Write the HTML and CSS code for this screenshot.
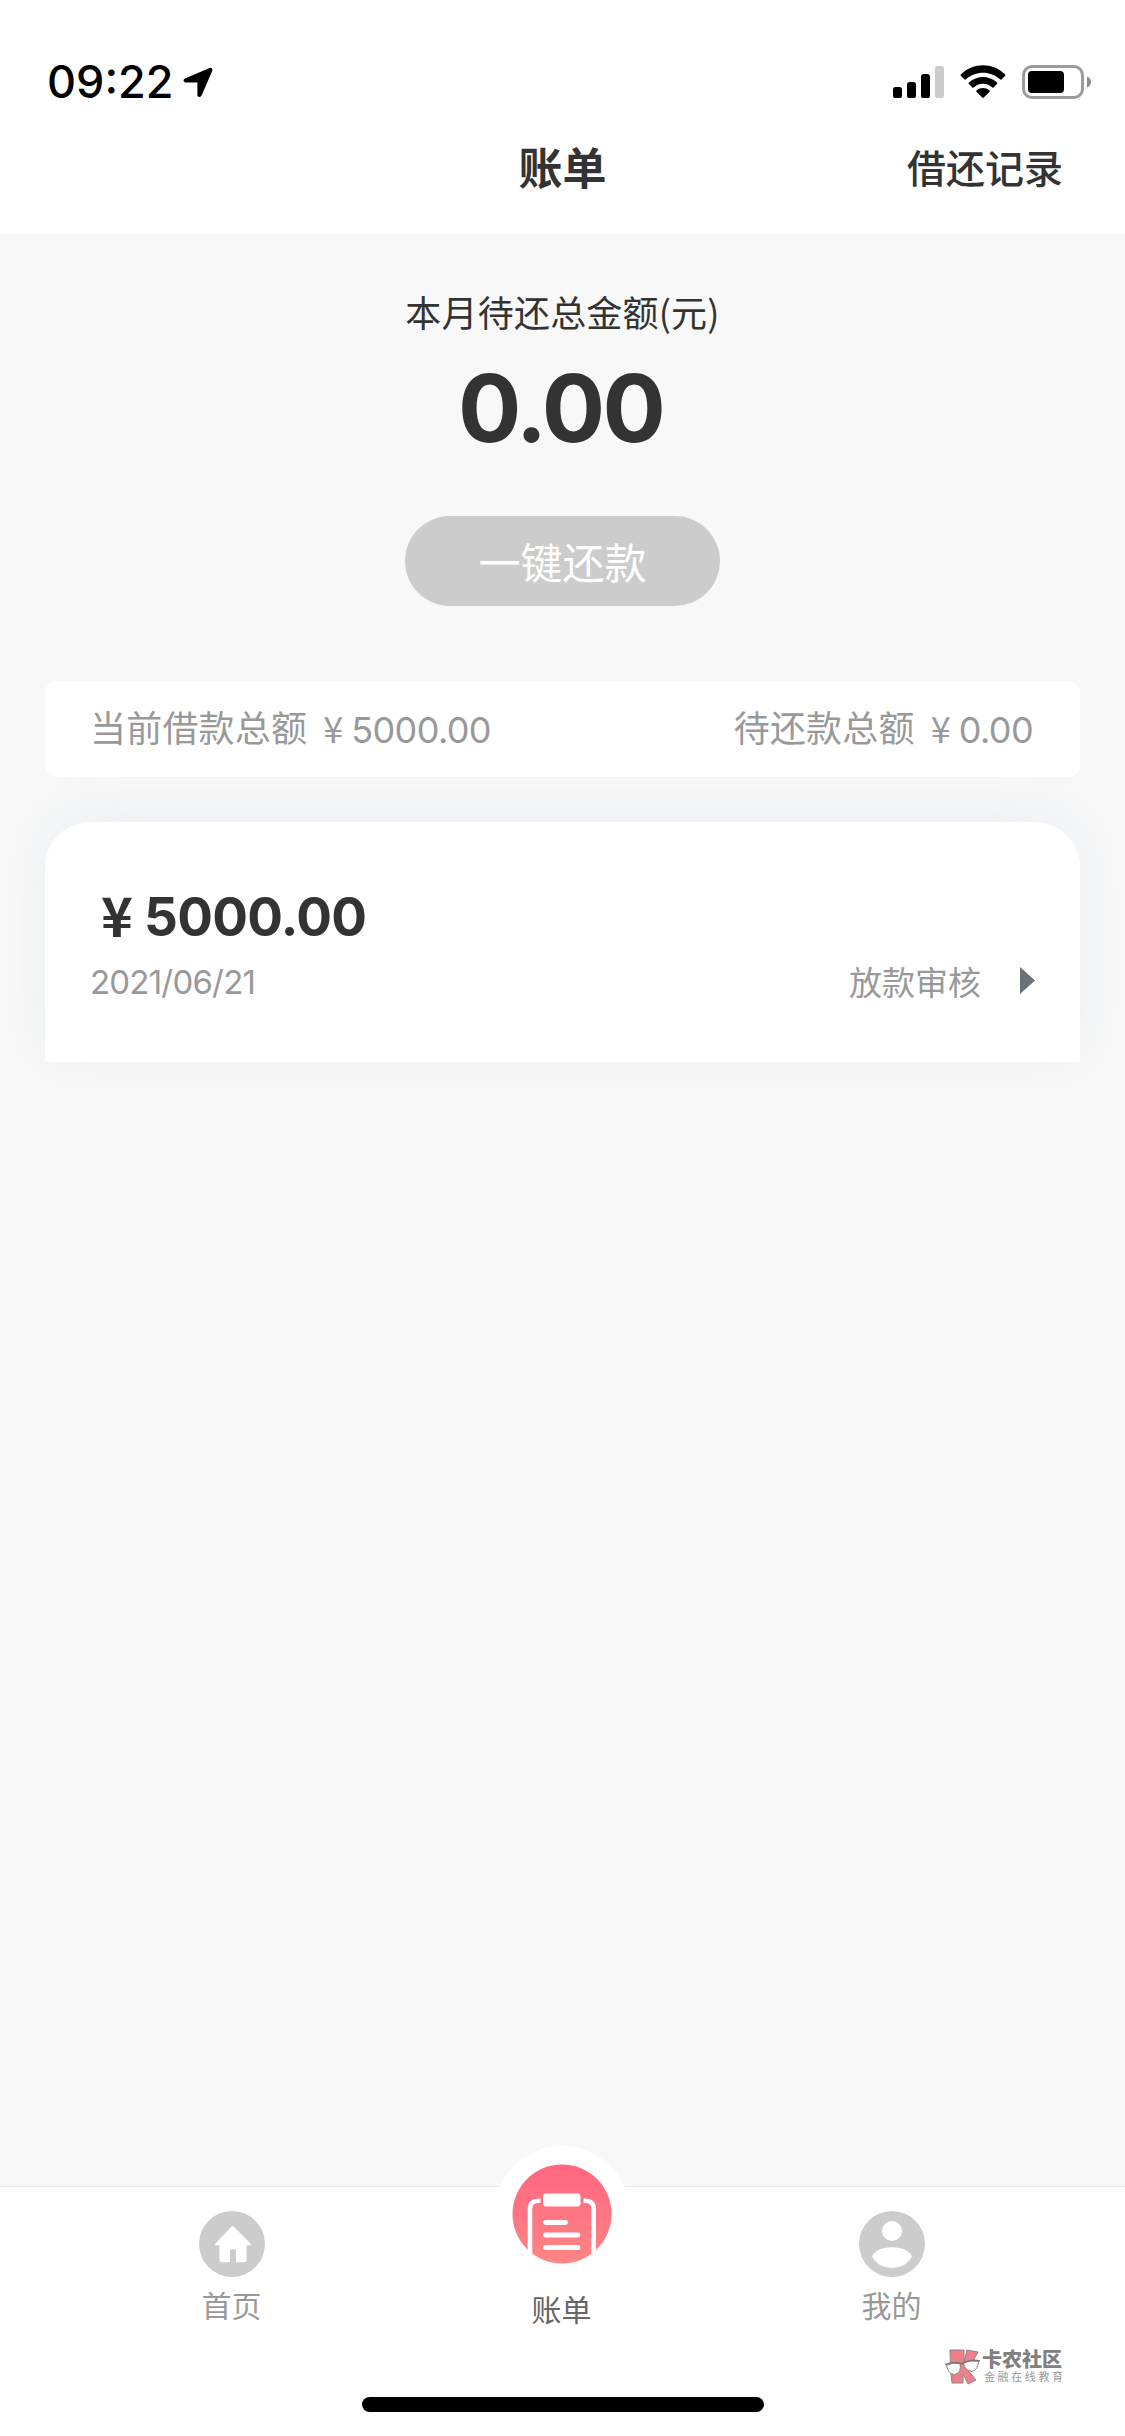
FILE: index.html
```html
<!DOCTYPE html>
<html lang="zh-CN">
<head>
<meta charset="utf-8">
<title>账单</title>
<link rel="stylesheet" href="styles.css">
</head>
<body>
<div class="screen">
  <header class="top">
    <div class="status">
      <span class="time">09:22</span>
      <svg class="locate" width="30" height="31" viewBox="0 0 30 31"><path d="M2 11.500 26.500 .9Q30 .2 29.200 4L18.600 28.600Q16.200 31.600 14.400 28.600V15.600H2.200Q-1.200 13.800 2 11.500Z"/></svg>
      <svg class="signal" width="51" height="33" viewBox="0 0 51 33"><rect y="22" width="9" height="11" rx="2.6"/><rect x="14" y="17" width="9" height="16" rx="2.6"/><rect x="28" y="9" width="9" height="24" rx="2.6"/><rect x="42" y="1" width="9" height="32" rx="2.6" fill="#ccc"/></svg>
      <svg class="wifi" width="46" height="34" viewBox="0 0 46 34"><path d="M1 9.3Q.2 10.2 1 11L4.3 14.3Q5.2 15 6 14.3C15.500 5.400 30.500 5.400 40 14.300Q40.800 15 41.700 14.300L45 11Q45.800 10.200 45 9.300C32.500-2.700 13.500-2.700 1 9.300ZM9 17.500Q8.200 18.300 9 19.100L12.400 22.400Q13.200 23 14 22.300C19.300 17.700 26.700 17.700 32 22.300Q32.800 23 33.600 22.400L37 19.100Q37.800 18.300 37 17.500C29 10.100 17 10.100 9 17.500ZM16.700 25.300Q15.800 26.200 16.700 27L22.200 32.500Q23 33.200 23.800 32.500L29.300 27Q30.200 26.200 29.300 25.300C25.700 22.200 20.300 22.200 16.700 25.300Z"/></svg>
      <svg class="battery" width="70" height="34" viewBox="0 0 70 34"><rect x="1.500" y="1.500" width="59" height="31" rx="8.500" fill="none" stroke="#9b9b9b" stroke-width="3"/><rect x="6" y="6" width="36" height="22" rx="4"/><path d="M65 11.500Q69 13 69 17T65 22.500Z" fill="#8c8c8c"/></svg>
    </div>
    <div class="bar"><h1 class="title">账单</h1><a class="record">借还记录</a></div>
  </header>
  <main class="main">
    <p class="due-label">本月待还总金额(元)</p>
    <p class="due">0.00</p>
    <button class="pay">一键还款</button>
    <section class="summary">
      <div class="sum"><span class="sum-label">当前借款总额</span><span class="money"><i class="yen">¥</i>5000.00</span></div>
      <div class="sum"><span class="sum-label">待还款总额</span><span class="money"><i class="yen">¥</i>0.00</span></div>
    </section>
    <section class="loan">
      <p class="amount"><i class="yen">¥</i><span>5000.00</span></p>
      <div class="detail"><span class="date">2021/06/21</span><span class="state">放款审核</span><svg class="arrow" width="15" height="27" viewBox="0 0 15 27"><path d="M0 0 15 13.500 0 27Z"/></svg></div>
    </section>
  </main>
  <nav class="tabs">
    <a class="tab">
      <svg width="66" height="66" viewBox="0 0 66 66"><circle cx="33" cy="33" r="33" fill="#ccc"/><path fill="#fff" d="M32.500 15.500Q33.500 14.500 34.500 15.500L51.500 32.500Q52.500 34.500 50.500 34.500H47.500V49Q47.500 51.200 45.500 51.200H37V40.500Q37 38 34 38T31 40.500V51.200H22.500Q20.500 51.200 20.500 49V34.500H17.500Q15 34.500 16.500 32.500Z"/></svg>
      <span>首页</span>
    </a>
    <a class="tab current">
      <div class="bump"><svg width="100" height="100" viewBox="0 0 100 100"><defs><linearGradient id="pink" x1="0" y1="0" x2="0" y2="1"><stop offset="0" stop-color="#ff6680"/><stop offset="1" stop-color="#ff8585"/></linearGradient></defs><circle cx="50" cy="50" r="49.500" fill="url(#pink)"/><path fill="none" stroke="#fff" stroke-width="4.600" d="M28.500 36.800H27Q18 36.800 18 45V93M71.500 36.800H73Q81.700 36.800 81.700 45V93"/><rect x="31" y="29.500" width="37.500" height="13" rx="3" fill="#fff"/><path stroke="#fff" stroke-width="4.800" stroke-linecap="round" d="M33.500 58.500H53.500M33.500 71H66M33.500 83.500H66"/></svg></div>
      <span>账单</span>
    </a>
    <a class="tab">
      <svg width="66" height="66" viewBox="0 0 66 66"><circle cx="33" cy="33" r="33" fill="#ccc"/><circle cx="33" cy="20" r="10" fill="#fff"/><path fill="#fff" d="M13.500 44.500C19 33.500 47 33.500 52.500 44.500Q53 45.500 52.500 46.500C44 60.500 22 60.500 13.500 46.500Q13 45.500 13.500 44.500Z"/></svg>
      <span>我的</span>
    </a>
  </nav>
  <div class="mark">
    <svg width="35" height="36" viewBox="0 0 35 36"><g stroke="#888" stroke-width="1" stroke-linejoin="round"><path fill="#ef7f88" d="M5 1H19V13L22 1 33 3 26 16 22 20 31 31 23 35 18 25V34H7L5.500 20Z"/><path fill="#fff" d="M1.500 16.500Q8 12.500 15 14.500 17 24 9.500 25.500 3 25 1.500 16.500ZM18.500 14Q25 10.500 33.500 12.500 33 21 27 22.500 20 22 18.500 14Z"/></g><path fill="none" stroke="#777" stroke-width="1.500" d="M0 15.500Q8 12.500 17 14.700 25 10 35 11.700"/></svg>
    <div class="mark-text"><b>卡农社区</b><small>金融在线教育</small></div>
  </div>
  <div class="home-bar"></div>
</div>
</body>
</html>
```
FILE: styles.css
```css
* { box-sizing: border-box; }
body { margin: 0; }
h1, p { margin: 0; font-weight: inherit; }
svg { display: block; flex: none; }
i { font-style: normal; }

.screen {
  position: relative;
  display: flex;
  flex-direction: column;
  width: 1125px;
  height: 2436px;
  overflow: hidden;
  background: #f8f8f8;
  color: #333;
  font-family: Inter, "Noto Sans CJK SC", sans-serif;
  white-space: nowrap;
}

.top { height: 234px; background: #fff; }
.status { display: flex; height: 102px; padding: 65px 34px 0 47px; }
.time { width: 136px; color: #000; font-size: 45px; font-weight: 500; line-height: 34px; }
.locate { margin-top: 2px; }
.signal { margin-left: auto; }
.wifi { margin-left: 16px; }
.battery { margin-left: 16px; margin-right: -1px; }
.bar { display: grid; grid-template-columns: 1fr auto 1fr; align-items: center; height: 127px; padding: 0 62px; }
.title { grid-column: 2; font-size: 44px; font-weight: 700; }
.record { justify-self: end; font-size: 39px; font-weight: 500; }

.main { flex: 1; display: flex; flex-direction: column; align-items: center; padding: 50px 45px 0; }
.due-label { height: 54px; font-family: "Noto Sans CJK SC", sans-serif; font-size: 36px; line-height: 54px; letter-spacing: .2px; }
.due { height: 136px; margin: 2px 4px 0 0; font-size: 94px; font-weight: 700; line-height: 136px; letter-spacing: -2.7px; }
.pay { width: 315px; height: 90px; margin-top: 40px; padding: 0; border: 0; border-radius: 45px; background: #ccc; color: #fff; font: 400 42px/86px "Noto Sans CJK SC", sans-serif; }
.pay::first-line { line-height: 84px; }
.summary { position: relative; z-index: 1; display: flex; justify-content: space-between; width: 100%; height: 96px; margin-top: 75px; padding: 0 47px 0 45px; border-radius: 12px; background: #fff; color: #999; font-size: 36px; line-height: 96px; }
.sum { display: flex; gap: 8px; }
.sum-label { letter-spacing: .2px; }
.money { line-height: 92px; letter-spacing: -.6px; }
.yen { display: inline-block; width: 1em; font-family: "Noto Sans CJK SC", sans-serif; letter-spacing: 0; text-align: center; }
.loan { width: 100%; height: 240px; margin-top: 45px; padding: 59px 45px 0; border-radius: 45px 45px 0 0; background: #fff; box-shadow: 0 -9px 54px rgba(213, 223, 235, .36); }
.amount { display: flex; height: 72px; font-size: 54px; font-weight: 700; line-height: 72px; }
.amount .yen { margin-top: -3px; }
.amount span { font-size: 53px; letter-spacing: -.7px; }
.detail { display: flex; align-items: center; height: 55px; color: #999; font-size: 33px; }
.date { letter-spacing: -.8px; padding-top: 2px; }
.state { margin-left: auto; margin-right: 39px; }
.arrow { fill: #6b7079; }

.tabs { display: grid; grid-template-columns: repeat(3, 1fr); height: 250px; padding: 0 68px 0 67px; border-top: 1px solid #e8e8e8; background: #fff; color: #999; font-size: 30px; line-height: 44px; }
.tab { display: flex; flex-direction: column; align-items: center; gap: 7px; padding-top: 24px; }
.tab span { margin-right: 1px; }
.current { gap: 0; padding: 0; color: #666; }
.bump { display: grid; place-items: center; width: 136px; height: 136px; margin: -41px 0 6px; border-radius: 50%; background: #fff; }

.mark { position: absolute; left: 945px; top: 2349px; display: flex; gap: 2px; color: #808080; font-family: "Noto Sans CJK SC", sans-serif; }
.mark-text { display: flex; flex-direction: column; }
.mark b { font-size: 20px; font-weight: 900; line-height: 19px; }
.mark small { padding-left: 2px; color: #999; font-size: 11px; line-height: 17px; letter-spacing: 2.6px; }
.home-bar { position: absolute; left: 362px; top: 2397px; width: 402px; height: 15px; border-radius: 8px; background: #000; }
```
